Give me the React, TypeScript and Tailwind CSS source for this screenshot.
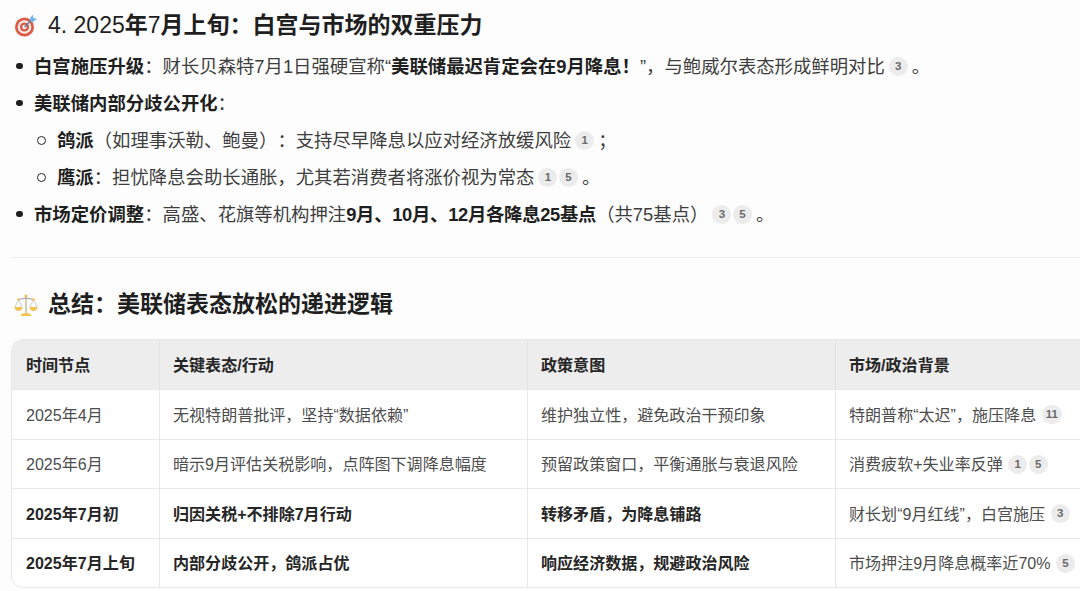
const FONT = '"Liberation Sans", "Noto Sans CJK SC", sans-serif';
const CO = "\uFF1A";
const CM = "\uFF0C";
const LP = "\uFF08";
const RP = "\uFF09";
const EX = "\uFF01";
const SC = "\uFF1B";

function Cites({ ns, className = "mx-[4px]" }: { ns: string[]; className?: string }) {
  return (
    <span className={`inline-flex gap-[1.5px] ${className}`}>
      {ns.map((n) => (
        <span key={n} className="inline-flex h-[19px] min-w-[19px] items-center justify-center rounded-full bg-[#ececec] px-[4px] text-[11.5px] font-bold leading-none text-[#6b6b6b]">
          {n}
        </span>
      ))}
    </span>
  );
}

function Dart() {
  return (
    <svg width="24" height="24" viewBox="0 0 24 24" className="shrink-0">
      <circle cx="10.5" cy="14" r="9.5" fill="#dd5a45" />
      <circle cx="10.5" cy="14" r="6.8" fill="#fbeee9" />
      <circle cx="10.5" cy="14" r="4.6" fill="#dd5a45" />
      <circle cx="10.5" cy="14" r="2.2" fill="#fbeee9" />
      <path d="M10.5 14L19 5.5" stroke="#5c7fa8" strokeWidth="1.5" />
      <path d="M15.5 6.5L18.5 1.5L19.5 5L23 6L18 9.5Z" fill="#6db4ee" />
    </svg>
  );
}

function Scales() {
  return (
    <svg width="24" height="24" viewBox="0 0 24 24" className="shrink-0">
      <path d="M12 3V20" stroke="#c9bfa0" strokeWidth="1.6" />
      <path d="M4.5 6.5L12 5L19.5 6.5" stroke="#9aa3a8" strokeWidth="1.2" fill="none" />
      <path d="M4.5 6.5L1 14M4.5 6.5L8 14M19.5 6.5L16 14M19.5 6.5L23 14" stroke="#b5b5b5" strokeWidth="0.7" fill="none" />
      <path d="M0.5 14H8.5C8.2 16.6 6.6 18 4.5 18C2.4 18 0.8 16.6 0.5 14Z" fill="#f2c14e" />
      <path d="M15.5 14H23.5C23.2 16.6 21.6 18 19.5 18C17.4 18 15.8 16.6 15.5 14Z" fill="#f2c14e" />
      <path d="M6.5 23C7 20.8 9 20 12 20C15 20 17 20.8 17.5 23Z" fill="#f2c14e" />
      <circle cx="12" cy="3" r="1.6" fill="#f2c14e" />
      <circle cx="4.5" cy="6.5" r="1.3" fill="#f2c14e" />
      <circle cx="19.5" cy="6.5" r="1.3" fill="#f2c14e" />
    </svg>
  );
}

function B({ children, className = "" }: { children: React.ReactNode; className?: string }) {
  return <b className={`font-bold text-[#1f1f1f] ${className}`}>{children}</b>;
}

function Li({ level = 0, children }: { level?: number; children: React.ReactNode }) {
  return (
    <li className="flex h-[37px] items-center">
      <span className={`flex shrink-0 items-center ${level ? "w-[46px] pl-[26px]" : "w-[23px] pl-[5px]"}`}>
        {level ? (
          <span className="h-[9px] w-[9px] rounded-full border border-[#262626]" />
        ) : (
          <span className="h-[6.5px] w-[6.5px] rounded-full bg-[#1f1f1f]" />
        )}
      </span>
      <span className="flex items-center whitespace-nowrap pt-[1px]">{children}</span>
    </li>
  );
}

const rows: { c: string[]; cites: string[]; bold: boolean }[] = [
  { c: ["2025年4月", `无视特朗普批评${CM}坚持“数据依赖”`, `维护独立性${CM}避免政治干预印象`, `特朗普称“太迟”${CM}施压降息`], cites: ["11"], bold: false },
  { c: ["2025年6月", `暗示9月评估关税影响${CM}点阵图下调降息幅度`, `预留政策窗口${CM}平衡通胀与衰退风险`, "消费疲软+失业率反弹"], cites: ["1", "5"], bold: false },
  { c: ["2025年7月初", "归因关税+不排除7月行动", `转移矛盾${CM}为降息铺路`, `财长划“9月红线”${CM}白宫施压`], cites: ["3"], bold: true },
  { c: ["2025年7月上旬", `内部分歧公开${CM}鸽派占优`, `响应经济数据${CM}规避政治风险`, "市场押注9月降息概率近70%"], cites: ["5"], bold: true },
];

const cols = "grid grid-cols-[147px_368px_308px_300px]";

function cell(i: number) {
  return `flex items-center whitespace-nowrap pt-[1px] ${i ? "border-l pl-[13px]" : "pl-[14px]"}`;
}

export default function App() {
  return (
    <div className="h-[591px] w-[1080px] overflow-hidden bg-[#fdfdfd] text-[18.36px] text-[#3d3d3d] [text-spacing-trim:space-all]" style={{ fontFamily: FONT }}>
      <div className="w-[1200px] pl-[11px]">
        <h3 className="flex h-[50px] items-center gap-[10px] pl-[3px] text-[23px] font-bold leading-none text-[#1f1f1f]">
          <Dart />
          <span><span className="font-normal">4. 2025</span>年<span className="font-normal">7</span>月上旬{CO}白宫与市场的双重压力</span>
        </h3>
        <ul className="mt-[-2.5px]">
          <Li><B>白宫施压升级</B>{CO}财长贝森特7月1日强硬宣称“<B>美联储最迟肯定会在9月降息{EX}</B>”{CM}与鲍威尔表态形成鲜明对比<Cites ns={["3"]} />。</Li>
          <Li><B>美联储内部分歧公开化</B>{CO}</Li>
          <Li level={1}><B>鸽派</B>{LP}如理事沃勒、鲍曼{RP}{CO}支持尽早降息以应对经济放缓风险<Cites ns={["1"]} />{SC}</Li>
          <Li level={1}><B>鹰派</B>{CO}担忧降息会助长通胀{CM}尤其若消费者将涨价视为常态<Cites ns={["1", "5"]} />。</Li>
          <Li><B>市场定价调整</B>{CO}高盛、花旗等机构押注<B className="tracking-[-0.3px]">9月、10月、12月各降息25基点</B>{LP}共75基点{RP}<Cites ns={["3", "5"]} />。</Li>
        </ul>
        <hr className="mt-[24px] border-0 border-t border-[#ededed]" />
        <h2 className="mt-[23px] flex h-[48px] items-center gap-[10px] pl-[3px] text-[23px] font-bold leading-none text-[#1f1f1f]">
          <Scales />
          <span>总结{CO}美联储表态放松的递进逻辑</span>
        </h2>
        <div className="mt-[10px] w-[1124px] overflow-hidden rounded-[12px] border border-[#e8e8e8] bg-white text-[16.06px] text-[#4d4d4d]">
          <div className={`${cols} h-[49.5px] bg-[#ededed] font-bold text-[#262626]`}>
            {["时间节点", "关键表态/行动", "政策意图", "市场/政治背景"].map((h, i) => (
              <div key={h} className={`${cell(i)} border-[#e2e2e2]`}>{h}</div>
            ))}
          </div>
          {rows.map((r) => (
            <div key={r.c[0]} className={`${cols} h-[49.5px] border-t border-[#e8e8e8]`}>
              {r.c.map((t, i) => (
                <div key={i} className={`${cell(i)} border-[#e8e8e8] ${r.bold && i < 3 ? "font-bold text-[#262626]" : ""}`}>
                  {t}
                  {i === 3 && <Cites ns={r.cites} className="ml-[5.5px]" />}
                </div>
              ))}
            </div>
          ))}
        </div>
      </div>
    </div>
  );
}
